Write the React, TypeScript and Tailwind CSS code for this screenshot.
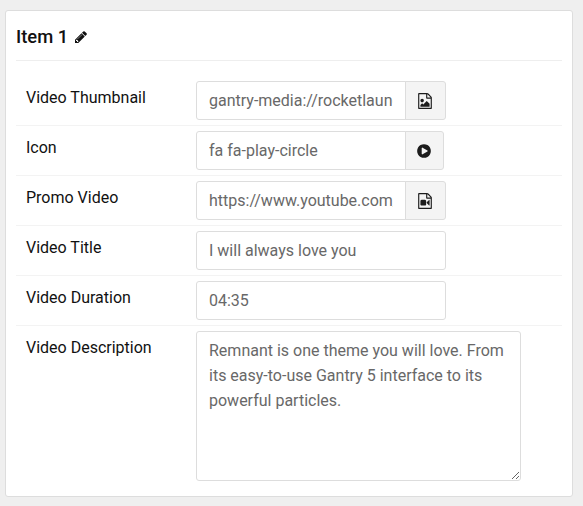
import type { ReactNode } from 'react';

const FILE =
  'M1596 380q28 28 48 76t20 88v1152q0 40-28 68t-68 28h-1344q-40 0-68-28t-28-68v-1600q0-40 28-68t68-28h896q40 0 88 20t76 48zm-444-244v376h376q-10-29-22-41l-313-313q-12-12-41-22zm384 1528v-1024h-416q-40 0-68-28t-28-68v-416h-768v1536h1280z';

const ICONS = {
  pencil:
    'M491 1536l91-91-235-235-91 91v107h128v128h107zm523-928q0-22-22-22-10 0-17 7l-542 542q-7 7-7 17 0 22 22 22 10 0 17-7l542-542q7-7 7-17zm-54-192l416 416-832 832h-416v-416zm683 96q0 53-37 90l-166 166-416-416 166-165q36-38 90-38 53 0 91 38l235 234q37 39 37 91z',
  play: 'M896 128q209 0 385.5 103t279.5 279.5 103 385.5-103 385.5-279.5 279.5-385.5 103-385.5-103-279.5-279.5-103-385.5 103-385.5 279.5-279.5 385.5-103zm384 823q32-18 32-55t-32-55l-544-320q-31-19-64-1-32 19-32 56v640q0 37 32 56 16 8 32 8 17 0 32-9z',
  image:
    FILE +
    'm-128-448v320h-1024v-192l192-192 128 128 384-384zm-832-192q-80 0-136-56t-56-136 56-136 136-56 136 56 56 136-56 136-136 56z',
  video:
    FILE +
    'm-640-896q52 0 90 38t38 90v384q0 52-38 90t-90 38h-384q-52 0-90-38t-38-90v-384q0-52 38-90t90-38h384zm492 2q20 8 20 30v576q0 22-20 30-8 2-12 2-14 0-23-9l-265-266v-90l265-266q9-9 23-9 4 0 12 2z',
};

function Icon({ name, className }: { name: keyof typeof ICONS; className: string }) {
  return (
    <svg viewBox="0 0 1792 1792" fill="currentColor" className={className} aria-hidden="true">
      <path d={ICONS[name]} />
    </svg>
  );
}

function Row({ label, children }: { label: string; children: ReactNode }) {
  return (
    <div className="flex items-start border-b border-[#f3f3f3] px-2.5 py-[5px] last:border-b-0">
      <div className="w-[170px] shrink-0 pt-[5px] leading-6">{label}</div>
      {children}
    </div>
  );
}

function TextInput({ value }: { value: string }) {
  return (
    <input
      defaultValue={value}
      className="h-[39px] w-[250px] rounded-[3px] border border-[#dddddd] bg-white px-3 text-[#686868] outline-none"
    />
  );
}

function PickerInput({ value, icon, wide }: { value: string; icon: keyof typeof ICONS; wide?: boolean }) {
  return (
    <div className="flex h-[39px]">
      <input
        defaultValue={value}
        className="w-[210px] rounded-l-[3px] border border-[#dddddd] bg-white px-3 text-[#686868] outline-none"
      />
      <button
        className={`-ml-px flex items-center rounded-r-[3px] border border-[#dddddd] bg-[#f4f4f4] text-[#1c1c1c] ${wide ? 'w-[41px] pl-[11px]' : 'w-[39px] pl-2.5'}`}
      >
        <Icon name={icon} className="size-4" />
      </button>
    </div>
  );
}

export default function App() {
  return (
    <div className="h-[506px] w-[583px] bg-[#efefef] pt-2.5 pl-[5px] font-['Roboto',sans-serif] text-base text-[#111111]">
      <section className="h-[487px] w-[568px] rounded-[3px] border border-[#dddddd] bg-white px-2.5">
        <h4 className="flex h-[50px] items-center border-b border-[#eeeeee] pt-0.5 text-[18.4px] font-medium">
          Item 1
          <Icon name="pencil" className="ml-1.5 size-[14px]" />
        </h4>
        <div className="pt-[15px]">
          <Row label="Video Thumbnail">
            <PickerInput value="gantry-media://rocketlaunch" icon="image" wide />
          </Row>
          <Row label="Icon">
            <PickerInput value="fa fa-play-circle" icon="play" />
          </Row>
          <Row label="Promo Video">
            <PickerInput value="https://www.youtube.com/watch" icon="video" wide />
          </Row>
          <Row label="Video Title">
            <TextInput value="I will always love you" />
          </Row>
          <Row label="Video Duration">
            <TextInput value="04:35" />
          </Row>
          <Row label="Video Description">
            <textarea
              defaultValue="Remnant is one theme you will love. From its easy-to-use Gantry 5 interface to its powerful particles."
              className="block h-[150px] w-[325px] resize rounded-[3px] border border-[#dddddd] bg-white px-3 py-1.5 leading-[25px] text-[#686868] outline-none"
            />
          </Row>
        </div>
      </section>
    </div>
  );
}
